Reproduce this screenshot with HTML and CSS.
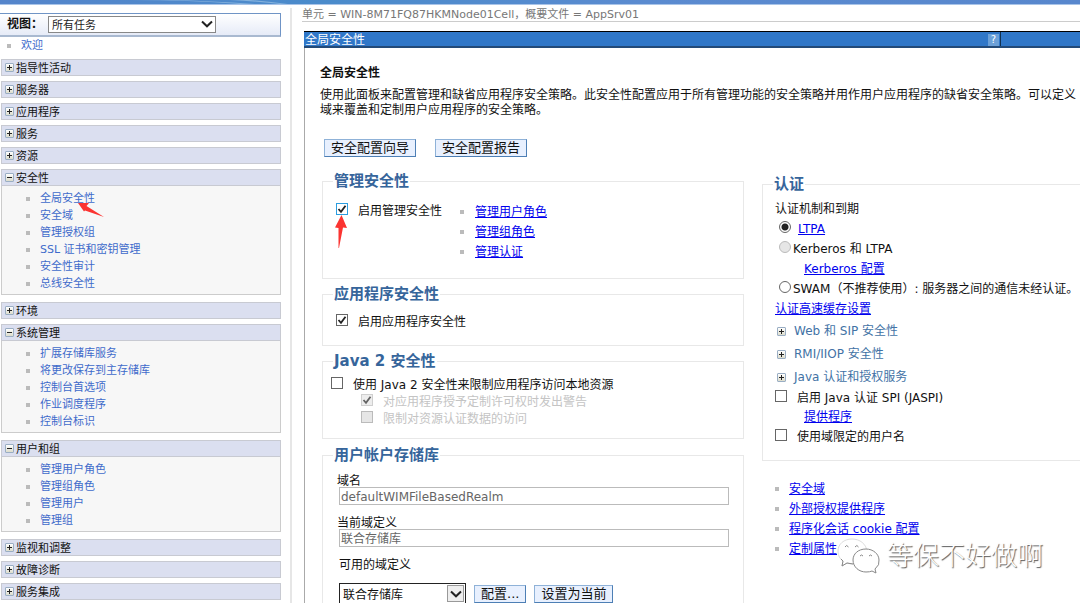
FILE: index.html
```html
<!DOCTYPE html>
<html lang="zh-CN">
<head>
<meta charset="utf-8">
<title>全局安全性</title>
<link rel="stylesheet" href="styles.css">
</head>
<body>
<header class="banner">
  <svg class="banner-art" viewBox="0 0 300 5" preserveAspectRatio="none" aria-hidden="true"><path d="M0 0Q60 0 110 5H125Q80 1 40 0ZM100 0Q130 2 150 5H158Q140 2 120 0Z" fill="#a9cbea" opacity=".6"/></svg>
</header>
<div class="shell">
  <nav class="side">
    <div class="view-bar">
      <label for="view">视图：</label>
      <span class="pick pick-view">
        <select id="view"><option>所有任务</option></select>
        <svg class="chevron" viewBox="0 0 12 8" aria-hidden="true"><path d="M1 1.5L6 6.3L11 1.5" fill="none" stroke="#222" stroke-width="2"/></svg>
      </span>
    </div>
    <a class="welcome" href="#">欢迎</a>
    <section class="group"><button class="head" type="button"><span class="box plus"></span>指导性活动</button></section>
    <section class="group"><button class="head" type="button"><span class="box plus"></span>服务器</button></section>
    <section class="group"><button class="head" type="button"><span class="box plus"></span>应用程序</button></section>
    <section class="group"><button class="head" type="button"><span class="box plus"></span>服务</button></section>
    <section class="group"><button class="head" type="button"><span class="box plus"></span>资源</button></section>
    <section class="group open">
      <button class="head" type="button"><span class="box"></span>安全性</button>
      <ul class="tasks">
        <li><a href="#">全局安全性</a>
          <svg class="arrow-link" viewBox="0 0 28 16" aria-hidden="true"><path d="M1 1L12 1L9.500 4L27 15L8 8.500L7 9.500Z" fill="#fb3431"/></svg></li>
        <li><a href="#">安全域</a></li>
        <li><a href="#">管理授权组</a></li>
        <li><a href="#">SSL 证书和密钥管理</a></li>
        <li><a href="#">安全性审计</a></li>
        <li><a href="#">总线安全性</a></li>
      </ul>
    </section>
    <section class="group"><button class="head" type="button"><span class="box plus"></span>环境</button></section>
    <section class="group open">
      <button class="head" type="button"><span class="box"></span>系统管理</button>
      <ul class="tasks">
        <li><a href="#">扩展存储库服务</a></li>
        <li><a href="#">将更改保存到主存储库</a></li>
        <li><a href="#">控制台首选项</a></li>
        <li><a href="#">作业调度程序</a></li>
        <li><a href="#">控制台标识</a></li>
      </ul>
    </section>
    <section class="group open">
      <button class="head" type="button"><span class="box"></span>用户和组</button>
      <ul class="tasks">
        <li><a href="#">管理用户角色</a></li>
        <li><a href="#">管理组角色</a></li>
        <li><a href="#">管理用户</a></li>
        <li><a href="#">管理组</a></li>
      </ul>
    </section>
    <section class="group"><button class="head" type="button"><span class="box plus"></span>监视和调整</button></section>
    <section class="group"><button class="head" type="button"><span class="box plus"></span>故障诊断</button></section>
    <section class="group"><button class="head" type="button"><span class="box plus"></span>服务集成</button></section>
  </nav>

  <main class="main">
    <div class="cell-info">单元 = WIN-8M71FQ87HKMNode01Cell，概要文件 = AppSrv01</div>
    <div class="panel">
      <div class="titlebar">
        <div class="title">全局安全性<button class="help" type="button">?</button></div>
        <div class="title-rest"></div>
      </div>
      <div class="content">
        <h1>全局安全性</h1>
        <p class="intro">使用此面板来配置管理和缺省应用程序安全策略。此安全性配置应用于所有管理功能的安全策略并用作用户应用程序的缺省安全策略。可以定义<br>域来覆盖和定制用户应用程序的安全策略。</p>
        <div class="actions">
          <button class="btn" type="button">安全配置向导</button>
          <button class="btn" type="button">安全配置报告</button>
        </div>
        <div class="columns">
          <div class="col">
            <fieldset class="fs-admin">
              <legend>管理安全性</legend>
              <div class="admin-row">
                <label class="opt opt-wide"><span class="pointed"><input class="focus" type="checkbox" checked>
                  <svg class="arrow-check" viewBox="0 0 12 34" aria-hidden="true"><path d="M6.500 0L12 13L8 12.500L4 33L3.500 33L3.500 13L0 12.500Z" fill="#fb3431"/></svg></span>启用管理安全性</label>
                <ul class="links">
                  <li><a href="#">管理用户角色</a></li>
                  <li><a href="#">管理组角色</a></li>
                  <li><a href="#">管理认证</a></li>
                </ul>
              </div>
            </fieldset>
            <fieldset class="fs-app">
              <legend>应用程序安全性</legend>
              <label class="opt opt-wide"><input type="checkbox" checked>启用应用程序安全性</label>
            </fieldset>
            <fieldset class="fs-java">
              <legend>Java 2 安全性</legend>
              <label class="opt"><input type="checkbox">使用 Java 2 安全性来限制应用程序访问本地资源</label>
              <label class="opt sub"><input type="checkbox" checked disabled>对应用程序授予定制许可权时发出警告</label>
              <label class="opt sub"><input type="checkbox" disabled>限制对资源认证数据的访问</label>
            </fieldset>
            <fieldset class="fs-repo">
              <legend>用户帐户存储库</legend>
              <div class="field">
                <label for="realm">域名</label>
                <input id="realm" type="text" value="defaultWIMFileBasedRealm" readonly>
              </div>
              <div class="field">
                <label for="current">当前域定义</label>
                <input id="current" type="text" value="联合存储库" readonly>
              </div>
              <label class="avail" for="available">可用的域定义</label>
              <div class="avail-row">
                <span class="pick pick-repo">
                  <select id="available"><option>联合存储库</option></select>
                  <span class="drop"><svg viewBox="0 0 12 8" aria-hidden="true"><path d="M1 1.500L6 6.300L11 1.500" fill="none" stroke="#222" stroke-width="2"/></svg></span>
                </span>
                <button class="btn" type="button">配置...</button>
                <button class="btn" type="button">设置为当前</button>
              </div>
            </fieldset>
          </div>

          <div class="col col-auth">
            <fieldset class="fs-auth">
              <legend>认证</legend>
              <div class="line">认证机制和到期</div>
              <div class="line radio"><input id="ltpa" type="radio" name="mech" aria-label="LTPA" checked><a class="ltpa" href="#">LTPA</a></div>
              <label class="line radio"><input type="radio" name="mech" disabled>Kerberos 和 LTPA</label>
              <div class="line nest"><a href="#">Kerberos 配置</a></div>
              <label class="line radio"><input type="radio" name="mech">SWAM（不推荐使用）: 服务器之间的通信未经认证。</label>
              <div class="line"><a href="#">认证高速缓存设置</a></div>
              <button class="tree" type="button"><span class="box plus"></span>Web 和 SIP 安全性</button>
              <button class="tree" type="button"><span class="box plus"></span>RMI/IIOP 安全性</button>
              <button class="tree" type="button"><span class="box plus"></span>Java 认证和授权服务</button>
              <label class="opt"><input type="checkbox">启用 Java 认证 SPI (JASPI)</label>
              <div class="line nest"><a href="#">提供程序</a></div>
              <label class="opt"><input type="checkbox">使用域限定的用户名</label>
            </fieldset>
            <ul class="links related">
              <li><a href="#">安全域</a></li>
              <li><a href="#">外部授权提供程序</a></li>
              <li><a href="#">程序化会话 cookie 配置</a></li>
              <li><a href="#">定制属性</a></li>
            </ul>
          </div>
        </div>
      </div>
    </div>
  </main>
</div>
<div class="watermark">
  <svg viewBox="0 0 44 38" aria-hidden="true">
    <g fill="#fff" stroke="#888" stroke-width="1">
      <path d="M15 2C7 2 1 7 1 14C1 19 3 22 6 24L5 29L10 26Q13 27 17 27C25 27 30 21 30 14C29 7 23 2 15 2Z" stroke="#ddd"/>
      <path d="M4 22L6 24L5 29L10 26L16 27" fill="none"/>
      <path d="M29 12C21 12 16 17 16 23C16 30 22 35 29 35Q33 35 35 34L39 36L38 32Q43 28 42 23C42 17 36 12 29 12Z"/>
    </g>
    <path d="M8 10Q9.500 7 11.500 10M18 10Q20 7 21.500 10M23 19Q24.500 17 26 19M32 19Q33.500 17 35 19" fill="none" stroke="#888"/>
  </svg>
  <span>等保不好做啊</span>
</div>
</body>
</html>
```
FILE: styles.css
```css
* { box-sizing: border-box; }
body {
  margin: 0;
  height: 100vh;
  overflow: hidden;
  position: relative;
  background: #fff;
  color: #111;
  font: 12px/20px "DejaVu Sans", "Noto Sans CJK SC", sans-serif;
}
button, input, select { font: inherit; color: inherit; margin: 0; }
ul { list-style: none; margin: 0; padding: 0; }
a { color: #00e; }

.banner { height: 5px; background: linear-gradient(90deg, #5585cb, #4a8bcb 30%, #5b8bd0 60%, #5887cd); border-bottom: 1px solid #a9c4e8; }
.banner-art { display: block; width: 300px; height: 4px; margin-left: 130px; }
.shell { display: flex; align-items: stretch; }

.side { flex: 0 0 281px; padding-top: 8px; font-size: 11px; line-height: 15px; }
.view-bar {
  display: flex; align-items: center; height: 24px; padding-left: 7px; margin-bottom: 1px;
  border: 1px solid #6f94c6; border-left: 0; border-bottom: 2px solid #a9b9d0;
  background: linear-gradient(#fff, #e6ebf7);
}
.view-bar label { width: 41px; font-size: 12px; font-weight: bold; white-space: nowrap; }
.pick { position: relative; display: block; }
.pick select { display: block; width: 100%; appearance: none; border-radius: 0; background: #fff; padding: 1px 3px 0; }
.pick-view { width: 168px; }
.pick-view select { height: 17px; border: 1px solid #888; color: #222; line-height: 15px; }
.chevron { position: absolute; right: 3px; top: 4px; width: 12px; height: 8px; }
.welcome { display: flex; align-items: center; height: 15px; margin-bottom: 6px; padding-left: 7px; }
.welcome::before { margin-right: 10px; }
.side a { color: #3f6bcb; text-decoration: none; }
.welcome::before, .tasks li::before, .links li::before { content: ""; flex: none; width: 4px; height: 4px; background: #bbb; }

.group { margin: 0 0 5px 1px; }
.group.open { margin-bottom: 7px; }
.head {
  display: flex; align-items: center; width: 100%; height: 17px; padding: 1px 0 0 3px; gap: 2px;
  border: 1px solid #c8cad2; background: #dbdff0; color: #111; line-height: 15px;
}
.box {
  position: relative; flex: none; width: 9px; height: 9px; border: 1px solid #9aaec4; border-radius: 1px;
  background: linear-gradient(90deg, #222, #222) center / 5px 1px no-repeat, linear-gradient(#fff, #dcdccc);
}
.head .box { margin-bottom: 2px; }
.box.plus {
  background: linear-gradient(#222, #222) center / 5px 1px no-repeat, linear-gradient(#222, #222) center / 1px 5px no-repeat, linear-gradient(#fff, #dcdccc);
}
.tasks { padding: 4px 0 2px; border: 1px solid #ccc; border-top: 0; background: #f7f7f7; }
.tasks li { position: relative; display: flex; align-items: center; height: 17px; padding-left: 24px; gap: 10px; }
.arrow-link { position: absolute; left: 75px; top: 12px; width: 28px; height: 16px; z-index: 1; }

.main { flex: 1; min-width: 0; margin: 3px 0 0 9px; padding-left: 10px; border-left: 2px solid #e6e6e6; }
.cell-info { height: 14px; line-height: 13px; font-size: 11px; color: #777; border-bottom: 1px solid #ccc; white-space: nowrap; }
.panel { margin: 9px 0 0 2px; border-left: 1px solid #aaa; }
.titlebar { display: flex; height: 17px; margin-left: -1px; border-top: 1px solid #000; border-bottom: 2px solid #234a78; background: #3077c8; }
.title { display: flex; align-items: center; justify-content: space-between; flex: 1; padding: 1px 1px 0; color: #fff; line-height: 14px; }
.title-rest { width: 80px; border-left: 1px solid #103050; }
.help { width: 11px; height: 12px; padding: 0; border: 0; background: #6ba0d8; color: #fff; font-size: 10px; line-height: 12px; }
.content { padding: 17px 0 0 15px; }
h1 { margin: 0 0 7px; font-size: 12px; line-height: 16px; font-weight: bold; }
.intro { margin: 0; line-height: 15px; white-space: nowrap; }
.actions { display: flex; gap: 19px; margin: 21px 0 14px 4px; }
.btn {
  height: 18px; padding: 0 6px; font-size: 13px; line-height: 16px; color: #111; white-space: nowrap;
  background: #e8f0fe; border: 1px solid #8fb2d8; border-right-color: #4d7fb5; border-bottom-color: #4d7fb5;
}

.columns { display: grid; grid-template-columns: 422px minmax(0, 1fr); column-gap: 18px; margin-left: 2px; }
.col { display: flex; flex-direction: column; gap: 5px; }
.col-auth { padding-top: 3px; gap: 18px; }
fieldset { margin: 0; min-width: 0; border: 1px solid #e8e8e8; padding: 0 14px; }
legend { margin-left: -4px; padding: 1px 1px 0; font-size: 15px; line-height: 19px; font-weight: bold; color: #36659b; }
.fs-admin { padding: 11px 13px 16px; }
.admin-row { display: flex; align-items: flex-start; }
.opt { display: flex; align-items: center; gap: 10px; height: 17px; white-space: nowrap; }
.opt-wide { height: 18px; }
.opt input, .radio input { margin-bottom: 4px; }
.pointed { position: relative; display: flex; }
.arrow-check { position: absolute; left: -1px; top: 12px; width: 12px; height: 34px; }
.links li { display: flex; align-items: center; height: 20px; gap: 11px; }
.admin-row .links { margin-left: 18px; }
.fs-app { padding: 9px 13px 14px; }
.fs-java { padding: 5px 8px 11px; }
.sub { margin-left: 30px; color: #c4c4c4; }
.fs-repo { margin-top: 1px; padding: 9px 14px 20px; }
.fs-admin legend, .fs-app legend { margin-left: -3px; }
.fs-java legend { margin-left: 2px; }

input[type="checkbox"], input[type="radio"] {
  appearance: none; flex: none; width: 12px; height: 12px; border: 1px solid #666; background-color: #fff;
}
input[type="checkbox"]:checked {
  background-image: url("data:image/svg+xml,%3Csvg xmlns='http://www.w3.org/2000/svg' viewBox='0 0 10 10'%3E%3Cpath d='M1.500 5L4 7.800L8.500 1.800' fill='none' stroke='%23222' stroke-width='1.800'/%3E%3C/svg%3E");
}
input[type="checkbox"].focus { border-color: #2b9de0; }
input[type="checkbox"]:disabled { border-color: #bbb; background-color: #e6e6e6; }
input[type="checkbox"]:disabled:checked { opacity: .7; }
input[type="radio"] { border-radius: 50%; }
input[type="radio"]:checked { background: radial-gradient(circle, #222 0 3px, #fff 4px); }
input[type="radio"]:disabled { border-color: #bbb; background: #e6e6e6; }

.field { display: flex; flex-direction: column; height: 42px; }
.field label { height: 13px; line-height: 14px; }
.field input {
  height: 18px; margin-left: 2px; padding: 1px 1px 0; border: 1px solid #bbb; border-radius: 0; background: #fff; color: #666; outline: 0;
}
.fs-repo .avail { display: block; height: 15px; line-height: 15px; margin-left: 2px; }
.avail-row { display: flex; gap: 8px; align-items: center; margin: 10px 0 0 2px; }
.pick-repo { width: 127px; }
.pick-repo select { height: 21px; border: 1px solid #222; }
.drop { position: absolute; right: 2px; top: 2px; width: 17px; height: 17px; display: flex; align-items: center; justify-content: center; border: 1px solid #999; background: #eee; pointer-events: none; }
.drop svg { width: 12px; height: 8px; }

.fs-auth { padding: 5px 0 14px 12px; border-right: 0; }
.fs-auth legend { margin-left: -2px; }
.line { display: flex; align-items: center; height: 20px; white-space: nowrap; }
.radio { padding-left: 4px; gap: 2px; }
.ltpa { margin-left: 5px; }
.nest { padding-left: 29px; }
.tree { display: flex; align-items: center; gap: 8px; height: 23px; padding: 1px 0 0 2px; border: 0; background: none; color: #4272a5; white-space: nowrap; }
.fs-auth .opt { height: 19px; }
.related { margin-left: 13px; }
.related li { gap: 10px; }

.watermark { position: absolute; left: 837px; top: 537px; display: flex; align-items: center; gap: 6px; pointer-events: none; }
.watermark svg { width: 44px; height: 38px; }
.watermark span { font-size: 26px; line-height: 38px; font-weight: 300; color: #fff; text-shadow: 1px 1px 1px #555; white-space: nowrap; }
```
